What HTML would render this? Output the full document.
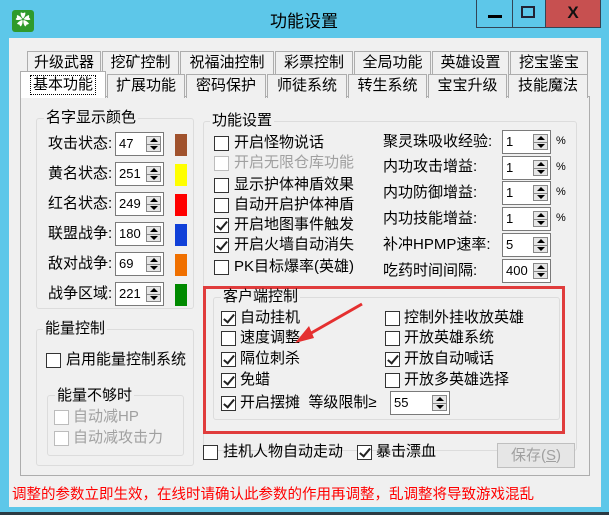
<!DOCTYPE html>
<html><head><meta charset="utf-8"><style>
*{box-sizing:border-box;margin:0;padding:0}
body{width:609px;height:515px;overflow:hidden;background:#2b3a42;font-family:"Liberation Sans","Noto Sans CJK SC",sans-serif;font-size:14px;color:#000;position:relative}
.a{position:absolute;white-space:nowrap}
.win{position:absolute;left:0;top:0;width:609px;height:512px;background:#5dc7e9}
.client{position:absolute;left:9px;top:38px;width:592px;height:469px;background:#f0f0f0}
.tab{position:absolute;height:24px;border:1px solid #adadad;border-bottom:none;background:#f0f0f0;text-align:center;line-height:22px;font-size:15px}
.grp{position:absolute;border:1px solid #dcdcdc;border-radius:3px}
.gt{position:absolute;background:#f0f0f0;padding:0 2px;font-size:15px;line-height:16px}
.cb{position:absolute;width:15px;height:15px;border:1px solid #333;background:#fff}
.cb.c::after{content:"";position:absolute;left:4px;top:0px;width:4px;height:9px;border:solid #222;border-width:0 2px 2px 0;transform:rotate(40deg)}
.cb.d{border-color:#bcbcbc}
.lbl{position:absolute;font-size:15px;line-height:18px;white-space:nowrap}
.in{position:absolute;height:24px;border:1px solid #7a7a7a;background:#fff;font-size:13px;line-height:22px;padding-left:3px}
.sp{position:absolute;right:2px;top:3px;width:15px;height:16px;border:1px solid #888;background:#e6e6e6}
.sp::before{content:"";position:absolute;left:3px;top:1px;border:4px solid transparent;border-bottom:4px solid #000;border-top:none}
.sp::after{content:"";position:absolute;left:3px;bottom:1px;border:4px solid transparent;border-top:4px solid #000;border-bottom:none}
.sp i{position:absolute;left:0;right:0;top:7px;height:1px;background:#888}
.sw{position:absolute;width:12px;height:22px}
</style></head><body>
<div class="win">
<div class="a" style="left:12px;top:10px;width:22px;height:22px;background:#2f9a2c;border-radius:3px;color:#fff;font-size:15px;line-height:22px;text-align:center">&#10047;</div>
<div class="a" style="left:270px;top:7px;font-size:17px">功能设置</div>
<div class="a" style="left:476px;top:0;width:37px;height:28px;border:1px solid #345;border-top:none;"><div class="a" style="left:11px;top:15px;width:14px;height:3px;background:#000"></div></div>
<div class="a" style="left:512px;top:0;width:34px;height:28px;border:1px solid #345;border-top:none;border-left:none"><div class="a" style="left:9px;top:6px;width:14px;height:12px;border:2px solid #223"></div></div>
<div class="a" style="left:546px;top:0;width:55px;height:28px;background:#c75050;border:1px solid #345;border-top:none;border-left:none;color:#111;font-weight:bold;font-size:17px;text-align:center;line-height:26px">X</div>
<div class="client"></div>
</div>
<!-- tab panel -->
<div class="a" style="left:20px;top:96px;width:570px;height:380px;border:1px solid #adadad;background:#fff"></div>
<div class="a" style="left:21px;top:97px;width:568px;height:378px;background:#f0f0f0"></div>
<div class="tab" style="left:27px;top:51px;width:74px">升级武器</div>
<div class="tab" style="left:102px;top:51px;width:77px">挖矿控制</div>
<div class="tab" style="left:180px;top:51px;width:94px">祝福油控制</div>
<div class="tab" style="left:275px;top:51px;width:78px">彩票控制</div>
<div class="tab" style="left:354px;top:51px;width:77px">全局功能</div>
<div class="tab" style="left:432px;top:51px;width:77px">英雄设置</div>
<div class="tab" style="left:510px;top:51px;width:78px">挖宝鉴宝</div>
<div class="tab" style="left:107px;top:74px;width:78px">扩展功能</div>
<div class="tab" style="left:186px;top:74px;width:80px">密码保护</div>
<div class="tab" style="left:267px;top:74px;width:80px">师徒系统</div>
<div class="tab" style="left:348px;top:74px;width:79px">转生系统</div>
<div class="tab" style="left:428px;top:74px;width:79px">宝宝升级</div>
<div class="tab" style="left:508px;top:74px;width:80px">技能魔法</div>
<div class="tab" style="left:20px;top:71px;width:86px;height:27px;background:#fff;border-color:#adadad"><span style="border:1px dotted #000;padding:0 2px;line-height:18px;display:inline-block;margin-top:3px">基本功能</span></div>

<!-- 名字显示颜色 -->
<div class="grp" style="left:36px;top:118px;width:158px;height:191px"></div>
<div class="gt" style="left:44px;top:110px">名字显示颜色</div>
<div class="lbl" style="left:48px;top:135px">攻击状态:</div><div class="in" style="left:115px;top:132px;width:49px">47<div class="sp"><i></i></div></div><div class="sw" style="left:175px;top:134px;background:#a0522d"></div>
<div class="lbl" style="left:48px;top:165px">黄名状态:</div><div class="in" style="left:115px;top:162px;width:49px">251<div class="sp"><i></i></div></div><div class="sw" style="left:175px;top:164px;background:#ffff00"></div>
<div class="lbl" style="left:48px;top:195px">红名状态:</div><div class="in" style="left:115px;top:192px;width:49px">249<div class="sp"><i></i></div></div><div class="sw" style="left:175px;top:194px;background:#ff0000"></div>
<div class="lbl" style="left:48px;top:225px">联盟战争:</div><div class="in" style="left:115px;top:222px;width:49px">180<div class="sp"><i></i></div></div><div class="sw" style="left:175px;top:224px;background:#1040d8"></div>
<div class="lbl" style="left:48px;top:255px">敌对战争:</div><div class="in" style="left:115px;top:252px;width:49px">69<div class="sp"><i></i></div></div><div class="sw" style="left:175px;top:254px;background:#f07000"></div>
<div class="lbl" style="left:48px;top:285px">战争区域:</div><div class="in" style="left:115px;top:282px;width:49px">221<div class="sp"><i></i></div></div><div class="sw" style="left:175px;top:284px;background:#008a00"></div>

<!-- 能量控制 -->
<div class="grp" style="left:36px;top:329px;width:158px;height:137px"></div>
<div class="gt" style="left:43px;top:321px">能量控制</div>
<div class="cb" style="left:46px;top:353px"></div><div class="lbl" style="left:66px;top:351px">启用能量控制系统</div>
<div class="grp" style="left:47px;top:395px;width:137px;height:61px"></div>
<div class="gt" style="left:55px;top:388px">能量不够时</div>
<div class="cb d" style="left:54px;top:410px"></div><div class="lbl" style="left:73px;top:408px;color:#a0a0a0">自动减HP</div>
<div class="cb d" style="left:54px;top:431px"></div><div class="lbl" style="left:73px;top:429px;color:#a0a0a0">自动减攻击力</div>

<!-- 功能设置 -->
<div class="grp" style="left:203px;top:121px;width:374px;height:330px"></div>
<div class="gt" style="left:210px;top:113px">功能设置</div>
<div class="cb" style="left:214px;top:136px"></div><div class="lbl" style="left:234px;top:134px">开启怪物说话</div>
<div class="cb d" style="left:214px;top:156px"></div><div class="lbl" style="left:234px;top:154px;color:#a0a0a0">开启无限仓库功能</div>
<div class="cb" style="left:214px;top:178px"></div><div class="lbl" style="left:234px;top:176px">显示护体神盾效果</div>
<div class="cb" style="left:214px;top:198px"></div><div class="lbl" style="left:234px;top:196px">自动开启护体神盾</div>
<div class="cb c" style="left:214px;top:218px"></div><div class="lbl" style="left:234px;top:216px">开启地图事件触发</div>
<div class="cb c" style="left:214px;top:238px"></div><div class="lbl" style="left:234px;top:236px">开启火墙自动消失</div>
<div class="cb" style="left:214px;top:260px"></div><div class="lbl" style="left:234px;top:258px">PK目标爆率(英雄)</div>

<div class="lbl" style="left:383px;top:133px">聚灵珠吸收经验:</div><div class="in" style="left:502px;top:130px;width:49px">1<div class="sp"><i></i></div></div><div class="a" style="left:556px;top:135px;font-size:11px">%</div>
<div class="lbl" style="left:383px;top:158px">内功攻击增益:</div><div class="in" style="left:502px;top:156px;width:49px">1<div class="sp"><i></i></div></div><div class="a" style="left:556px;top:161px;font-size:11px">%</div>
<div class="lbl" style="left:383px;top:184px">内功防御增益:</div><div class="in" style="left:502px;top:181px;width:49px">1<div class="sp"><i></i></div></div><div class="a" style="left:556px;top:186px;font-size:11px">%</div>
<div class="lbl" style="left:383px;top:210px">内功技能增益:</div><div class="in" style="left:502px;top:207px;width:49px">1<div class="sp"><i></i></div></div><div class="a" style="left:556px;top:212px;font-size:11px">%</div>
<div class="lbl" style="left:383px;top:236px">补冲HPMP速率:</div><div class="in" style="left:502px;top:233px;width:49px">5<div class="sp"><i></i></div></div>
<div class="lbl" style="left:383px;top:262px">吃药时间间隔:</div><div class="in" style="left:502px;top:259px;width:49px">400<div class="sp"><i></i></div></div>

<!-- 客户端控制 -->
<div class="a" style="left:203px;top:286px;width:362px;height:148px;border:3px solid #e03c3c"></div>
<div class="grp" style="left:213px;top:297px;width:347px;height:123px"></div>
<div class="gt" style="left:221px;top:289px">客户端控制</div>
<div class="cb c" style="left:221px;top:311px"></div><div class="lbl" style="left:240px;top:309px">自动挂机</div>
<div class="cb" style="left:221px;top:331px"></div><div class="lbl" style="left:240px;top:329px">速度调整</div>
<div class="cb c" style="left:221px;top:352px"></div><div class="lbl" style="left:240px;top:350px">隔位刺杀</div>
<div class="cb c" style="left:221px;top:373px"></div><div class="lbl" style="left:240px;top:371px">免蜡</div>
<div class="cb c" style="left:221px;top:396px"></div><div class="lbl" style="left:240px;top:394px">开启摆摊&nbsp;&nbsp;等级限制≥</div>
<div class="in" style="left:390px;top:391px;width:60px">55<div class="sp"><i></i></div></div>
<div class="cb" style="left:385px;top:311px"></div><div class="lbl" style="left:404px;top:309px">控制外挂收放英雄</div>
<div class="cb" style="left:385px;top:331px"></div><div class="lbl" style="left:404px;top:329px">开放英雄系统</div>
<div class="cb c" style="left:385px;top:352px"></div><div class="lbl" style="left:404px;top:350px">开放自动喊话</div>
<div class="cb" style="left:385px;top:373px"></div><div class="lbl" style="left:404px;top:371px">开放多英雄选择</div>
<svg class="a" style="left:0;top:0" width="609" height="515"><path d="M362 304 L306 336" stroke="#e53030" stroke-width="3"/><path d="M295 343 L309 326 L314 338 Z" fill="#e53030"/></svg>

<!-- bottom -->
<div class="cb" style="left:203px;top:445px"></div><div class="lbl" style="left:223px;top:443px">挂机人物自动走动</div>
<div class="cb c" style="left:357px;top:445px"></div><div class="lbl" style="left:376px;top:443px">暴击漂血</div>
<div class="a" style="left:497px;top:443px;width:78px;height:25px;border:1px solid #bfbfbf;background:#e6e6e6;color:#a0a0a0;font-size:15px;text-align:center;line-height:23px">保存(<u>S</u>)</div>
<div class="a" style="left:12px;top:483px;color:#f00;font-size:14.5px">调整的参数立即生效，在线时请确认此参数的作用再调整，乱调整将导致游戏混乱</div>
</body></html>
